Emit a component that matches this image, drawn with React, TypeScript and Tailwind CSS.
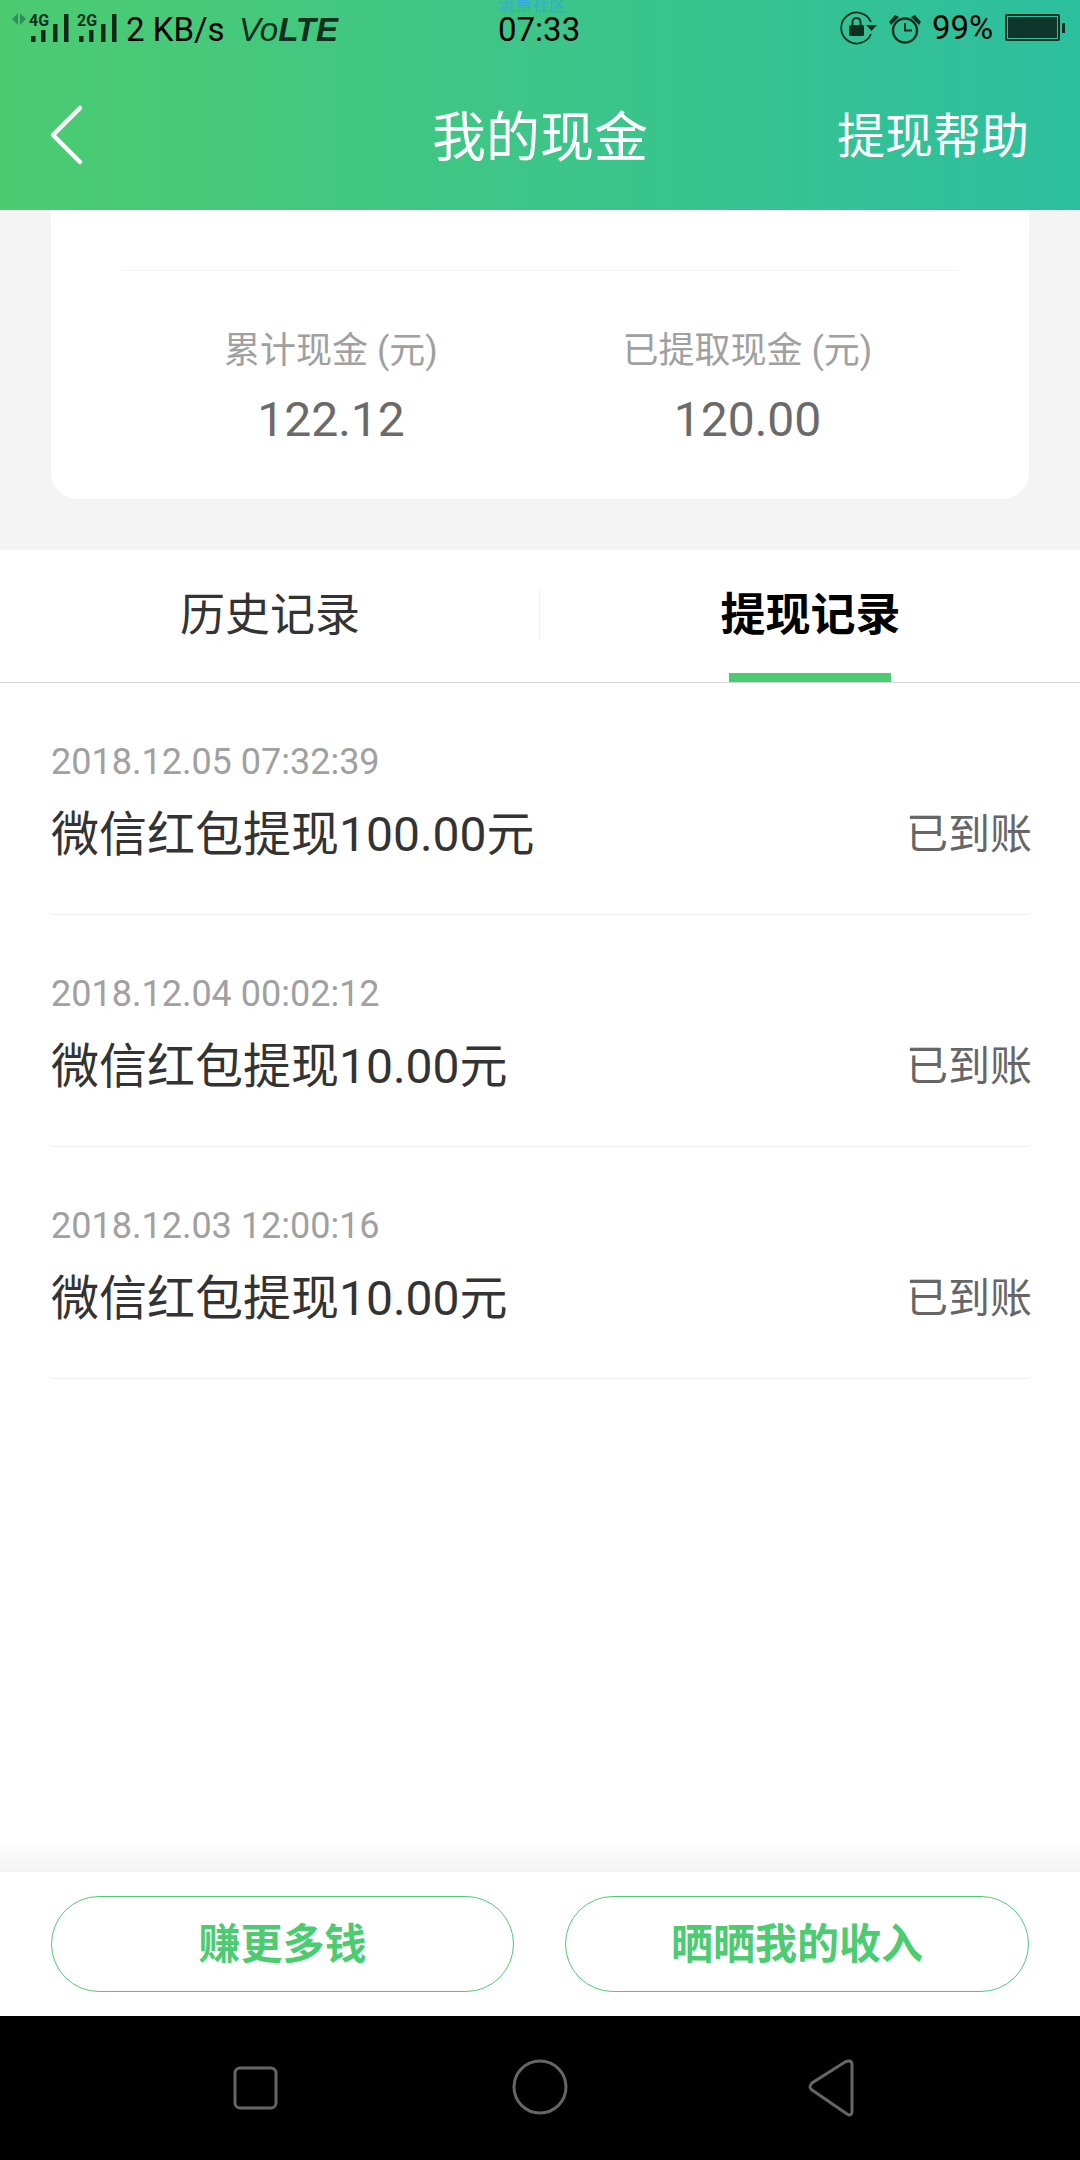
const font = { fontFamily: '"Roboto", "Noto Sans CJK SC", sans-serif' };

const records = [
  { time: "2018.12.05 07:32:39", title: "微信红包提现100.00元" },
  { time: "2018.12.04 00:02:12", title: "微信红包提现10.00元" },
  { time: "2018.12.03 12:00:16", title: "微信红包提现10.00元" },
];

const Signal = ({ label }: { label: string }) => (
  <svg width="48" height="30" viewBox="0 0 48 30" className="block overflow-visible">
    <text x="0" y="13" fontSize="16" fontWeight="700" fontFamily="Roboto" fill="#10301f">{label}</text>
    <rect x="2" y="23" width="4.500" height="6" fill="#0c2a1a" />
    <rect x="12" y="17" width="4.500" height="12" fill="#0c2a1a" />
    <rect x="24" y="11" width="4.500" height="18" fill="#0c2a1a" />
    <rect x="35" y="1" width="4.500" height="28" fill="#0c2a1a" />
  </svg>
);

const StatusBar = () => (
  <div className="relative h-[60px] text-[33px] text-black">
    <div className="absolute left-[12px] top-[13px] flex items-start">
      <svg width="14" height="12" viewBox="0 0 14 12" className="mr-[3px]">
        <path d="M6 0v12L0 6zM8 0l6 6-6 6z" fill="#2f8f5c" />
      </svg>
      <Signal label="4G" />
      <Signal label="2G" />
    </div>
    <div className="absolute left-[126px] top-[10px] leading-[40px]">2 KB/s</div>
    <div className="absolute left-[239px] top-[11px] font-['Liberation_Sans'] text-[33px] leading-[37px] italic text-[#10301f]">
      Vo<span className="font-bold">LTE</span>
    </div>
    <div className="absolute left-[498px] top-[16px] leading-[28px]">07:33</div>
    <div className="absolute left-[498px] -top-[6px] text-[17px] leading-[22px] text-[#35a8e0]">流量社区</div>
    <svg width="38" height="34" viewBox="0 0 38 34" className="absolute left-[840px] top-[11px]">
      <path d="M31 23A15.500 15.500 0 1 1 31 11" fill="none" stroke="#10301f" strokeWidth="1.800" />
      <path d="M26 14h11l-5.500 6z" fill="#10301f" />
      <rect x="9" y="14" width="15" height="11" rx="1.500" fill="#10301f" />
      <path d="M12.500 14v-3a4 4 0 0 1 8 0v3" fill="none" stroke="#10301f" strokeWidth="2" />
    </svg>
    <svg width="32" height="30" viewBox="0 0 32 30" className="absolute left-[889px] top-[14px]">
      <circle cx="16" cy="16.500" r="12" fill="none" stroke="#10301f" strokeWidth="2.400" />
      <path d="M16 9v7.500h7" fill="none" stroke="#10301f" strokeWidth="2" />
      <path d="M0 8l6-7 4 2-8 8zM32 8l-6-7-4 2 8 8z" fill="#10301f" />
    </svg>
    <div className="absolute left-[932px] top-[8px] leading-[40px]">99%</div>
    <div className="absolute left-[1005px] top-[14px] flex items-center">
      <div className="h-[27px] w-[55px] rounded-[2px] border-2 border-[#10301f] p-[1px]">
        <div className="h-full w-full bg-[#10362b]" />
      </div>
      <div className="ml-[2px] h-[10px] w-[3px] bg-[#10301f]" />
    </div>
  </div>
);

const Header = () => (
  <div className="h-[210px] bg-gradient-to-r from-[#4ccb70] to-[#2cbf9e] text-white">
    <StatusBar />
    <div className="relative flex h-[150px] items-start justify-center pt-[42px]">
      <svg width="40" height="64" viewBox="0 0 40 64" fill="none" stroke="white" strokeWidth="4.500" strokeLinecap="round" strokeLinejoin="round" className="absolute left-[47px] top-[43px]">
        <path d="M33 5L6 32l27 27" />
      </svg>
      <div className="text-[54px] leading-[74px]">我的现金</div>
      <div className="absolute right-[51px] top-[45px] text-[48px] leading-[64px]">提现帮助</div>
    </div>
  </div>
);

const Summary = () => (
  <div className="h-[340px] bg-[#f4f4f4] px-[51px]">
    <div className="h-[289px] rounded-b-[26px] bg-white px-[70px] pt-[60px]">
      <div className="h-px bg-[#f1f1f1]" />
      <div className="flex pt-[55px]">
        <div className="w-[418px] pl-[2px] text-center">
          <div className="text-[36px] leading-[50px] text-[#a0a0a0]">累计现金 (元)</div>
          <div className="mt-[16px] text-[48px] leading-[56px] text-[#6a6a6a]">122.12</div>
        </div>
        <div className="w-[416px] pl-[1px] text-center">
          <div className="text-[36px] leading-[50px] text-[#a0a0a0]">已提取现金 (元)</div>
          <div className="mt-[16px] text-[48px] leading-[56px] text-[#6a6a6a]">120.00</div>
        </div>
      </div>
    </div>
  </div>
);

const Tabs = () => (
  <div className="flex h-[133px] border-b border-[#d8d8d8] bg-white">
    <div className="flex w-[539px] items-start justify-center pl-[1px] pt-[36px] text-[45px] leading-[60px] text-[#333333]">
      历史记录
    </div>
    <div className="mt-[40px] h-[50px] w-px bg-[#f0f0f0]" />
    <div className="relative flex flex-1 items-start justify-center pl-[1px] pt-[36px] text-[45px] font-bold leading-[60px] text-black">
      提现记录
      <div className="absolute bottom-0 left-[189px] h-[9px] w-[162px] bg-[#4ccb70]" />
    </div>
  </div>
);

const RecordRow = ({ time, title }: { time: string; title: string }) => (
  <div className="flex h-[232px] items-end justify-between border-b border-[#efefef] pb-[46px]">
    <div>
      <div className="text-[36px] leading-[44px] text-[#a0a0a0]">{time}</div>
      <div className="mt-[18px] text-[48px] leading-[66px] text-[#333333]">{title}</div>
    </div>
    <div className="mr-[-3px] pb-[4px] text-[42px] leading-[58px] text-[#666666]">已到账</div>
  </div>
);

const BottomBar = () => (
  <div className="flex h-[144px] items-center gap-[51px] bg-white px-[51px]">
    <button className="h-[96px] w-[463px] rounded-full border border-[#4ccb70] text-[42px] font-bold text-[#4ccb70]">赚更多钱</button>
    <button className="h-[96px] w-[464px] rounded-full border border-[#4ccb70] text-[42px] font-bold text-[#4ccb70]">晒晒我的收入</button>
  </div>
);

const NavBar = () => (
  <div className="flex h-[144px] items-start bg-black">
    <svg width="1080" height="144" viewBox="0 0 1080 144" fill="none" stroke="#666666" strokeWidth="3">
      <rect x="235" y="52" width="41" height="40" rx="5" />
      <circle cx="540" cy="71" r="26" />
      <path d="M852 49v46q0 6-5 3L812 74q-4-3 0-7l33-21q7-3 7 3z" />
    </svg>
  </div>
);

export default function App() {
  return (
    <div className="flex h-[2160px] w-[1080px] flex-col overflow-hidden bg-white" style={font}>
      <Header />
      <Summary />
      <Tabs />
      <div className="flex-1 px-[51px]">
        {records.map((r) => (
          <RecordRow key={r.time} time={r.time} title={r.title} />
        ))}
      </div>
      <div className="h-[32px] bg-gradient-to-b from-white to-[#f3f3f3]" />
      <BottomBar />
      <NavBar />
    </div>
  );
}
